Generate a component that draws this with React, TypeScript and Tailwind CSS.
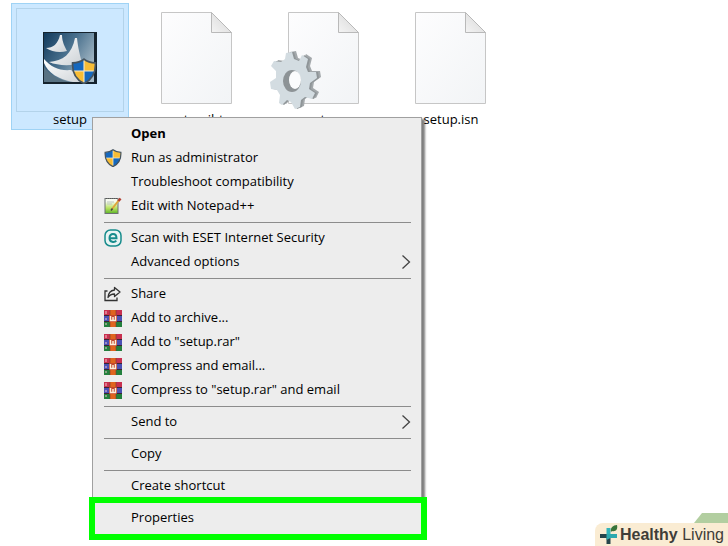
import { ReactNode } from "react";

interface FileItem {
  name: string;
  icon: ReactNode;
  selected?: boolean;
}

interface MenuEntry {
  label: string;
  icon?: ReactNode;
  bold?: boolean;
  submenu?: boolean;
  highlighted?: boolean;
}

const SHIELD =
  "M12 1C9 3.4 5.500 4.400 1.500 4.500C1 13 3.500 19.500 12 23.500C20.500 19.500 23 13 22.500 4.500C18.500 4.400 15 3.400 12 1Z";

function ShieldIcon({ id, className, x, y, size }: { id: string; className?: string; x?: number; y?: number; size?: number }) {
  return (
    <svg viewBox="0 0 24 24" className={className} x={x} y={y} width={size} height={size}>
      <clipPath id={id}>
        <path d={SHIELD} />
      </clipPath>
      <g clipPath={`url(#${id})`}>
        <rect width="12" height="12" fill="#1668bd" />
        <rect x="12" width="12" height="12" fill="#f8bd35" />
        <rect y="12" width="12" height="12" fill="#f8bd35" />
        <rect x="12" y="12" width="12" height="12" fill="#1668bd" />
        <path d="M12 0V24M0 12H24" stroke="#f4ead0" strokeWidth="1" />
      </g>
      <path d={SHIELD} fill="none" stroke="#46545f" strokeWidth="1.600" />
    </svg>
  );
}

function InstallerIcon() {
  return (
    <svg viewBox="0 0 54 52" className="w-[54px] h-[52px]">
      <defs>
        <linearGradient id="sky" x1="0" y1="0" x2="1" y2="0.600">
          <stop offset="0" stopColor="#123a5c" />
          <stop offset="0.500" stopColor="#49708d" />
          <stop offset="1" stopColor="#a5b9c6" />
        </linearGradient>
        <linearGradient id="sail" x1="0" y1="0" x2="1" y2="1">
          <stop offset="0" stopColor="#ffffff" />
          <stop offset="1" stopColor="#cdd2d6" />
        </linearGradient>
      </defs>
      <rect width="54" height="52" fill="#15232e" />
      <rect x="1" y="1" width="50" height="49" fill="url(#sky)" />
      <path d="M1 27C8 35 16 39 28 38L44 50H30C15 47 5 41 1 31Z" fill="url(#sail)" />
      <path d="M1 35C7 43 17 48 27 50H1Z" fill="#587283" />
      <path d="M3 16C10 16 15 12 17 3H19C19 10 22 15 24 19C17 21 9 20 3 16Z" fill="url(#sail)" />
      <path d="M6 30C20 29 29 22 32 6H34C35 16 37 23 39 31C29 34 15 34 6 30Z" fill="url(#sail)" />
      <ShieldIcon id="tile-shield" x={28} y={26} size={26} />
    </svg>
  );
}

function DocumentIcon() {
  return (
    <svg viewBox="0 0 72 93" className="w-[72px] h-[93px]">
      <defs>
        <linearGradient id="paper" x1="0" y1="0" x2="1" y2="1">
          <stop offset="0" stopColor="#fdfdfe" />
          <stop offset="1" stopColor="#f2f4f6" />
        </linearGradient>
        <linearGradient id="fold" x1="0" y1="1" x2="1" y2="0">
          <stop offset="0" stopColor="#f4f4f4" />
          <stop offset="1" stopColor="#d4d4d4" />
        </linearGradient>
      </defs>
      <path d="M.5 .5H50.500L70.500 20.500V91.500H.5Z" fill="url(#paper)" stroke="#c6c6c6" />
      <path d="M50.500 .5V20.500H70.500Z" fill="url(#fold)" stroke="#b9b9b9" />
    </svg>
  );
}

const GEAR =
  "M16 3L22 2L24 9L29 11L32 5L38 9L36 17L38 22L46 22L47 28L40 33L39 39L45 43L42 49L35 47L31 50L30 57L25 59L21 52L17 50L12 55L9 53L10 45L7 40L1 39L0 32L6 28L6 21L1 16L4 11L11 12L15 9Z";

function GearDocumentIcon() {
  return (
    <div className="relative">
      <DocumentIcon />
      <svg viewBox="0 0 52 60" className="absolute -left-[18px] top-[38px] w-[52px] h-[60px]">
        <path d={GEAR} transform="translate(4 -1)" fill="#a3a8ab" />
        <path d={GEAR} transform="translate(2 0)" fill="#8f9598" />
        <path d={GEAR} fill="#d3dce1" />
        <ellipse cx="22" cy="31" rx="9" ry="11" fill="#8d9396" />
        <ellipse cx="25" cy="30" rx="6" ry="9" fill="#fbfcfd" />
      </svg>
    </div>
  );
}

function NotepadIcon() {
  return (
    <svg viewBox="0 0 18 18" className="size-[18px]">
      <defs>
        <linearGradient id="note" x1="0" y1="0" x2="0" y2="1">
          <stop offset="0.200" stopColor="#f7fbf0" />
          <stop offset="0.650" stopColor="#b7e25e" />
          <stop offset="1" stopColor="#5cb42a" />
        </linearGradient>
      </defs>
      <rect x="1" y="1.500" width="13" height="15" fill="url(#note)" stroke="#6d7272" />
      <path d="M2 1.500H13" stroke="#555" strokeDasharray="1 1" />
      <path d="M3 5H10M3 7H8" stroke="#b9c4bd" />
      <path d="M8 12L15 3" stroke="#e0a63b" strokeWidth="2" />
      <path d="M14.500 4L16.500 1.500" stroke="#b33e32" strokeWidth="2.500" />
      <path d="M7 13.500L8.500 11.500" stroke="#444" strokeWidth="1.500" />
    </svg>
  );
}

function EsetIcon() {
  return (
    <svg viewBox="0 0 18 18" className="size-[18px]" fill="none" stroke="#178c8c">
      <rect x="1" y="1" width="16" height="16" rx="5.500" fill="#e8f4f3" strokeWidth="1.500" />
      <path d="M5.500 9.300H12.500C12.500 3.700 5.500 3.700 5.500 9C5.500 13.600 10.500 13.700 12.300 11.700" strokeWidth="2" />
    </svg>
  );
}

function ShareIcon() {
  return (
    <svg viewBox="0 0 18 18" className="size-[18px]" fill="none" stroke="#333" strokeWidth="1.300">
      <path d="M3.500 6H1V15.500H13V12.500" />
      <path d="M10.500 2.500L16 7L10.500 11.500V9C7.500 9 5.500 10 4 12.500C4.300 8 6.500 5.500 10.500 5Z" strokeLinejoin="round" />
    </svg>
  );
}

function RarIcon() {
  return (
    <svg viewBox="0 0 18 17" className="w-[18px] h-[17px]">
      <rect width="18" height="6" fill="#c8304f" />
      <rect y="6" width="18" height="5" fill="#4a50b4" />
      <rect y="11" width="18" height="6" fill="#23803d" />
      <path d="M0 5.500H18M0 11.500H18" stroke="#3b2534" />
      <path d="M2 1V4M2 8V10M2 13V15" stroke="#f0c3ca" />
      <rect x="6" width="6" height="17" fill="#e0641e" />
      <path d="M6 0V17M12 0V17" stroke="#70402c" strokeWidth="0.600" />
      <rect x="5" y="5" width="8" height="7" rx="1" fill="#c4482c" />
      <path d="M6.500 6V10.500H11.500V6M9 7V10" stroke="#fbefdc" strokeWidth="1.500" fill="none" />
    </svg>
  );
}

function BrandMark() {
  return (
    <svg viewBox="0 0 20 22" className="w-5 h-[22px]">
      <path d="M7.500 4H11.500V11H7.500Z" fill="#32b4ba" />
      <path d="M1 10H8V14H1Z" fill="#26454b" />
      <path d="M7.500 13H11.500V20H7.500Z" fill="#26454b" />
      <path d="M7.500 10H18V14H11.500L7.500 16Z" fill="#2ca9af" />
      <path d="M12 8C11 4 14 1 18 1C19 5 17 8 13 7Z" fill="#39753a" />
    </svg>
  );
}

const files: FileItem[] = [
  { name: "setup", icon: <InstallerIcon />, selected: true },
  { name: "setup.ibt", icon: <DocumentIcon /> },
  { name: "setup", icon: <GearDocumentIcon /> },
  { name: "setup.isn", icon: <DocumentIcon /> },
];

// every inner list is one section, sections are split by a line
const sections: MenuEntry[][] = [
  [
    { label: "Open", bold: true },
    { label: "Run as administrator", icon: <ShieldIcon id="menu-shield" className="size-[18px]" /> },
    { label: "Troubleshoot compatibility" },
    { label: "Edit with Notepad++", icon: <NotepadIcon /> },
  ],
  [
    { label: "Scan with ESET Internet Security", icon: <EsetIcon /> },
    { label: "Advanced options", submenu: true },
  ],
  [
    { label: "Share", icon: <ShareIcon /> },
    { label: "Add to archive...", icon: <RarIcon /> },
    { label: 'Add to "setup.rar"', icon: <RarIcon /> },
    { label: "Compress and email...", icon: <RarIcon /> },
    { label: 'Compress to "setup.rar" and email', icon: <RarIcon /> },
  ],
  [{ label: "Send to", submenu: true }],
  [{ label: "Copy" }],
  [{ label: "Create shortcut" }],
  [{ label: "Properties", highlighted: true }],
];

function FileTile({ name, icon, selected }: FileItem) {
  return (
    <button
      className={`flex w-[118px] h-[127px] shrink-0 flex-col items-center border p-1 ${
        selected ? "border-[#9fd3f5] bg-[#cce8ff]" : "border-transparent"
      }`}
    >
      <span
        className={`flex h-[104px] w-full shrink-0 items-center justify-center border pb-1 ${
          selected ? "border-[#b3d3ea]" : "border-transparent"
        }`}
      >
        {icon}
      </span>
      <span className="leading-[14px]">{name}</span>
    </button>
  );
}

function MenuRow({ label, icon, bold, submenu, highlighted }: MenuEntry) {
  return (
    <li role="none" className="relative">
      <button
        role="menuitem"
        aria-haspopup={submenu ? "menu" : undefined}
        className="flex h-6 w-full items-center pl-[11px] pr-[10px] text-left hover:bg-white"
      >
        <span className="flex w-[27px] shrink-0">{icon}</span>
        <span className={bold ? "grow font-bold" : "grow"}>{label}</span>
        {submenu && (
          <svg viewBox="0 0 10 16" className="w-[10px] h-4" fill="none" stroke="#444" strokeWidth="1.300">
            <path d="M1.500 1.500L8.500 8L1.500 14.500" />
          </svg>
        )}
      </button>
      {highlighted && (
        <span className="pointer-events-none absolute -left-1 -right-[6px] -top-[9px] -bottom-[10px] border-6 border-[#00ff00]" />
      )}
    </li>
  );
}

export default function App() {
  return (
    <main className="relative min-h-screen overflow-hidden bg-white font-['Open_Sans','Noto_Sans',sans-serif] text-[13px] text-black">
      <div className="flex gap-[9px] pl-[11px] pt-[3px]">
        {files.map((file, i) => (
          <FileTile key={i} {...file} />
        ))}
      </div>

      <ul
        role="menu"
        className="absolute left-[92px] top-[117px] w-[330px] border border-[#a0a0a0] bg-[#ededed] py-1 shadow-[3px_2px_2px_#00000080]"
      >
        {sections.map((section, i) => (
          <li key={i} role="none">
            {i > 0 && <hr className="mt-1 mb-[3px] ml-[11px] mr-[10px] border-t border-[#8c8c8c]" />}
            <ul role="group">
              {section.map((entry) => (
                <MenuRow key={entry.label} {...entry} />
              ))}
            </ul>
          </li>
        ))}
      </ul>

      <a
        href="#"
        className="absolute bottom-0 right-0 flex flex-col items-end font-['Liberation_Sans',Arial,sans-serif] text-base text-[#3f3d38]"
      >
        <svg viewBox="0 0 34 10" className="w-[34px] h-[10px]">
          <path d="M8 0H34V10H0Z" fill="#b2cea0" />
        </svg>
        <span className="flex h-[23px] items-center gap-px rounded-tl-lg bg-[#faecd3] pl-1 pr-1">
          <BrandMark />
          <span>
            <b>Healthy</b> Living
          </span>
        </span>
      </a>
    </main>
  );
}
